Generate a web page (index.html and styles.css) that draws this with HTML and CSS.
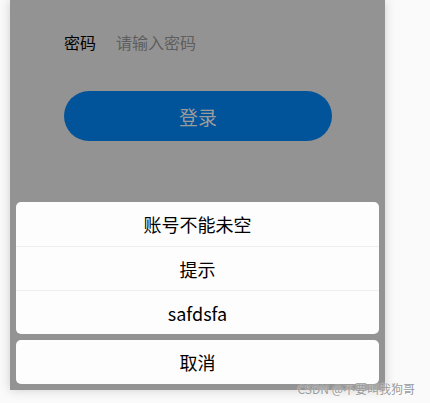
FILE: index.html
```html
<!DOCTYPE html>
<html lang="zh-CN">
<head>
    <meta charset="UTF-8">
    <meta name="viewport" content="width=device-width, initial-scale=1.0">
    <title>登录</title>
    <link rel="stylesheet" href="styles.css">
</head>
<body>
    <div class="stage">
        <div class="phone">
            <div class="form">
                <div class="field">
                    <label for="pwd">密码</label>
                    <input type="password" id="pwd" placeholder="请输入密码">
                </div>
                <button class="login">登录</button>
            </div>

            <div class="sheet">
                <div class="group">
                    <div class="item">账号不能未空</div>
                    <div class="item">提示</div>
                    <div class="item">safdsfa</div>
                </div>
                <div class="group">
                    <div class="item">取消</div>
                </div>
            </div>
        </div>
        <span class="watermark">CSDN @不要叫我狗哥</span>
    </div>
</body>
</html>
```

FILE: styles.css
```css
body {
    margin: 0;
    background-color: #fafafa;
    font-family: "Noto Sans CJK SC", "Noto Sans", sans-serif;
}
.stage {
    position: relative;
    height: 403px;
    overflow: hidden;
}
.phone {
    margin-left: 10px;
    width: 375px;
    height: 390px;
    box-sizing: border-box;
    padding: 0 6px 6px;
    background-color: #939393;
    box-shadow: 0 0 10px rgba(0,0,0,0.18);
    display: flex;
    flex-direction: column;
}
.form {
    padding: 0 47px 0 48px;
}
.field {
    display: flex;
    align-items: center;
    height: 84px;
    font-size: 16px;
}
.field label {
    color: #000;
    width: 52px;
}
.field input {
    border: none;
    outline: none;
    background: transparent;
    padding: 0;
    font-family: inherit;
    font-size: 16px;
    color: #000;
}
.field input::placeholder {
    color: #5e5e5e;
}
.login {
    display: block;
    width: 268px;
    height: 50px;
    margin-top: 7px;
    border: none;
    border-radius: 25px;
    background-color: #01539a;
    color: #9c9c9c;
    font-family: inherit;
    font-size: 19px;
}
.sheet {
    margin-top: auto;
    display: flex;
    flex-direction: column;
    gap: 6px;
}
.group {
    background-color: #fdfdfd;
    border-radius: 5px;
    overflow: hidden;
}
.item {
    height: 44px;
    box-sizing: border-box;
    display: flex;
    align-items: center;
    justify-content: center;
    font-size: 18px;
    color: #000;
}
.item + .item {
    border-top: 1px solid #eeeeee;
}
.watermark {
    position: absolute;
    right: 15px;
    bottom: 6px;
    font-size: 12px;
    color: #9a9a9a;
    text-shadow: 0 0 2px #fff;
}
```
